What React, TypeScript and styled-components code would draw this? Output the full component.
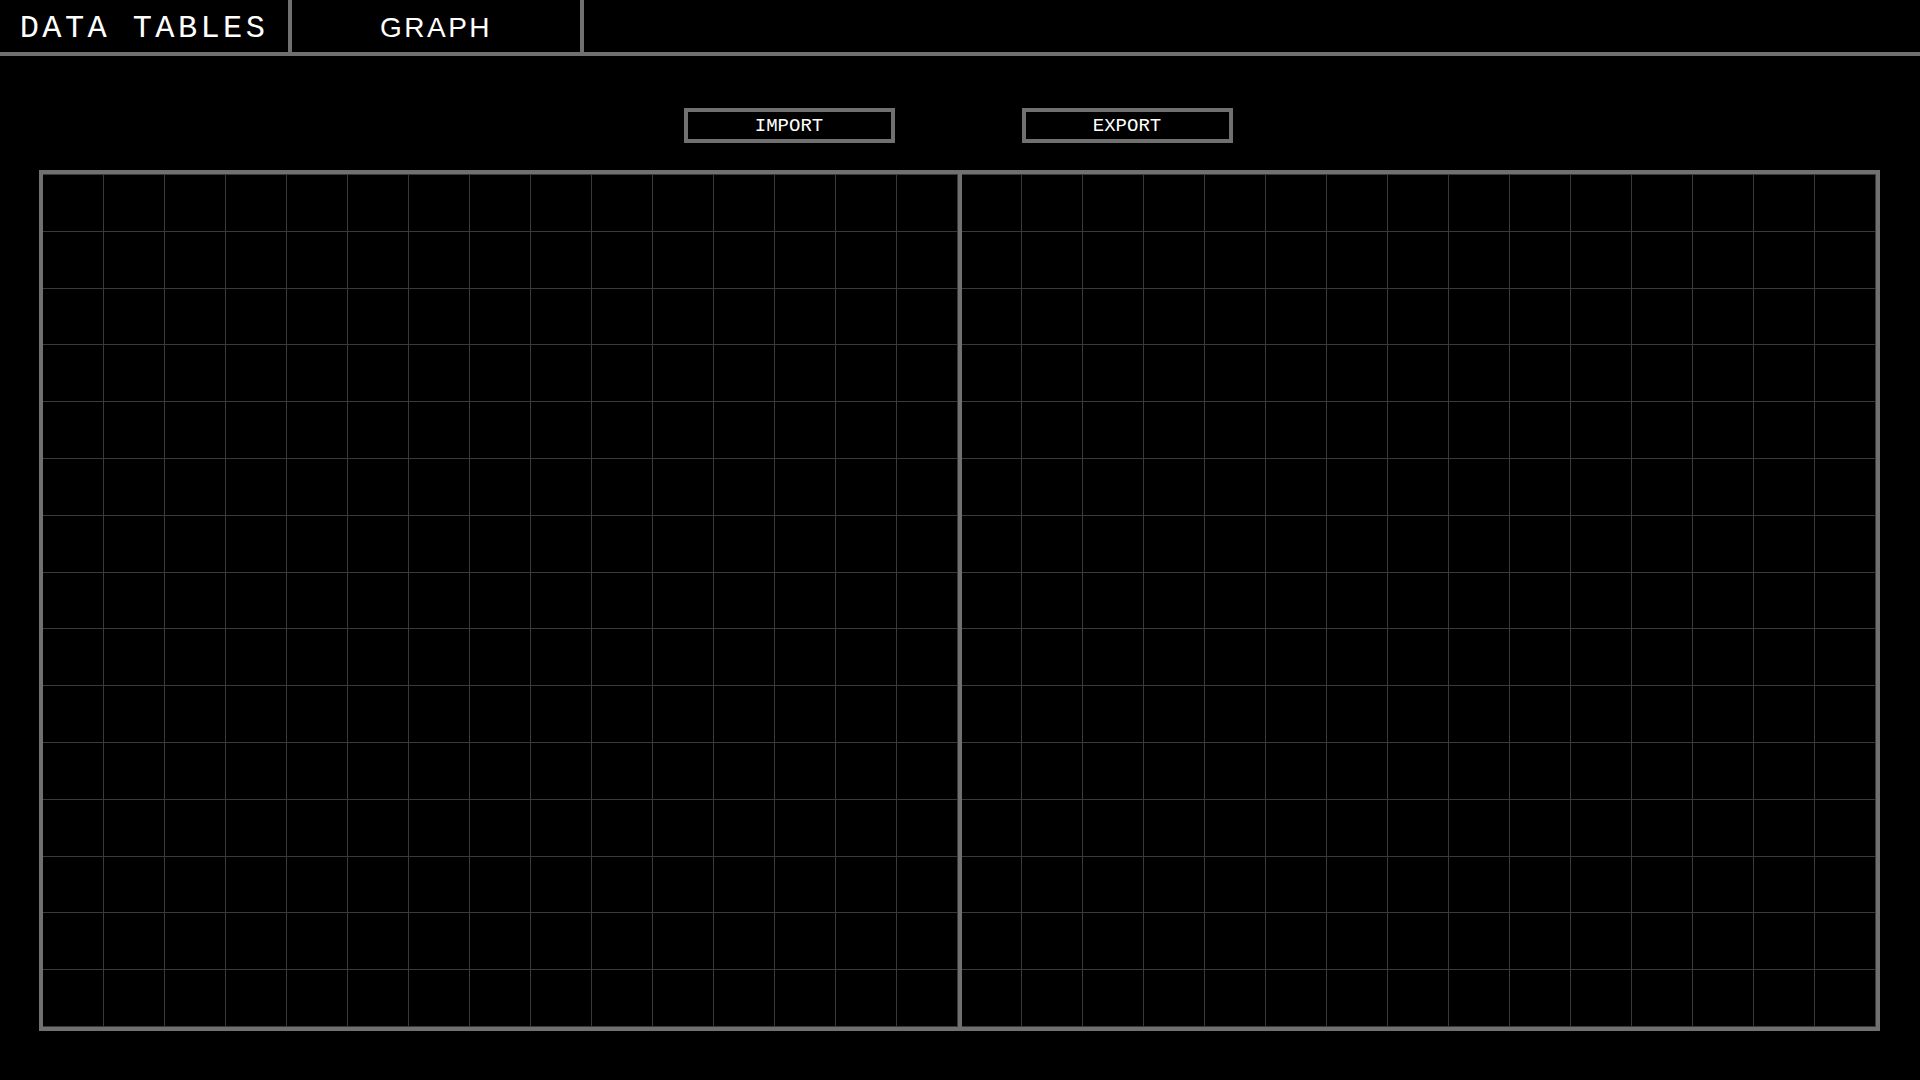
import React from "react";
import styled, { createGlobalStyle } from "styled-components";

const GlobalStyle = createGlobalStyle`
  html, body {
    margin: 0;
    padding: 0;
    background: #000;
    color: #fff;
    font-family: "Liberation Sans", Arial, sans-serif;
  }
  * { box-sizing: border-box; }
`;

const LINE = "#707070";
const GRID = "#3a3a3a";

const Page = styled.div`
  width: 1920px;
  height: 1080px;
  background: #000;
  display: flex;
  flex-direction: column;
`;

const TabBar = styled.nav`
  display: flex;
  height: 56px;
  border-bottom: 4px solid ${LINE};
`;

const Tab = styled.div<{ $mono?: boolean }>`
  width: 292px;
  height: 52px;
  border-right: 4px solid ${LINE};
  display: flex;
  align-items: center;
  justify-content: center;
  padding-top: ${(p) => (p.$mono ? "5px" : "3px")};
  color: #fff;
  font-family: ${(p) =>
    p.$mono ? `"Liberation Mono", "Courier New", monospace` : `"Liberation Sans", Arial, sans-serif`};
  font-size: ${(p) => (p.$mono ? "32px" : "28px")};
  letter-spacing: ${(p) => (p.$mono ? "3.4px" : "2.5px")};
  white-space: nowrap;
`;

const Main = styled.main`
  padding: 52px 40px 0 39px;
  display: flex;
  flex-direction: column;
`;

const Actions = styled.div`
  display: flex;
  justify-content: center;
  gap: 127px;
  padding-right: 3px;
`;

const ActionButton = styled.button`
  width: 211px;
  height: 35px;
  background: #000;
  border: 4px solid ${LINE};
  color: #fff;
  font-family: "Liberation Mono", "Courier New", monospace;
  font-size: 19px;
  font-weight: 400;
  padding: 0;
  display: flex;
  align-items: center;
  justify-content: center;
  cursor: pointer;
`;

const Board = styled.section`
  margin-top: 27px;
  height: 861px;
  border: 4px solid ${LINE};
  display: grid;
  grid-template-columns: 1fr 4px 1fr;
`;

const Divider = styled.div`
  background: ${LINE};
`;

const Sheet = styled.div`
  display: grid;
  grid-template-columns: repeat(15, 1fr);
  grid-template-rows: repeat(15, 1fr);
  border-top: 1px solid ${GRID};
`;

const Cell = styled.div`
  border-right: 1px solid ${GRID};
  border-bottom: 1px solid ${GRID};
`;

const cells = Array.from({ length: 225 }, (_, i) => i);

function DataSheet() {
  return (
    <Sheet>
      {cells.map((i) => (
        <Cell key={i} />
      ))}
    </Sheet>
  );
}

export default function App() {
  return (
    <Page>
      <GlobalStyle />
      <TabBar>
        <Tab $mono>DATA TABLES</Tab>
        <Tab>GRAPH</Tab>
      </TabBar>
      <Main>
        <Actions>
          <ActionButton>IMPORT</ActionButton>
          <ActionButton>EXPORT</ActionButton>
        </Actions>
        <Board>
          <DataSheet />
          <Divider />
          <DataSheet />
        </Board>
      </Main>
    </Page>
  );
}
